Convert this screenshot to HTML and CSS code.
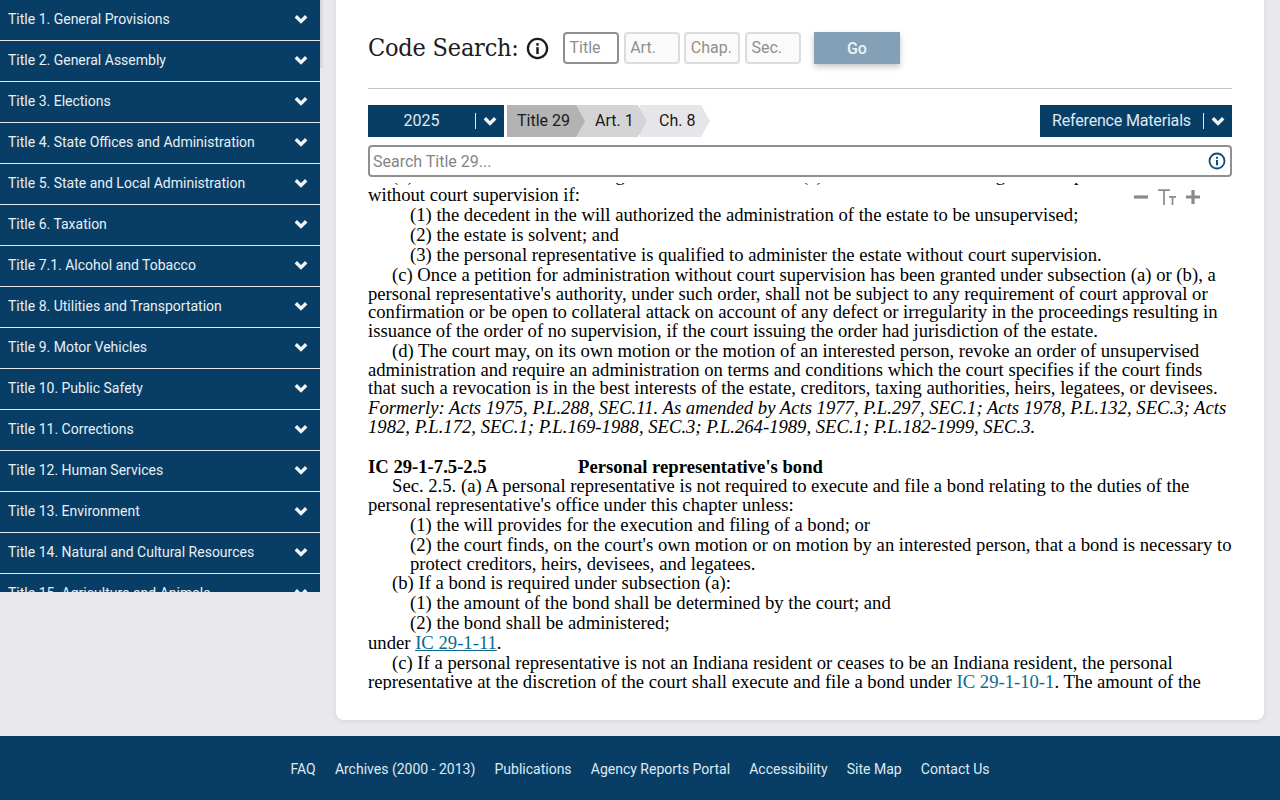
FILE: index.html
```html
<!DOCTYPE html>
<html lang="en">
<head>
<meta charset="utf-8">
<title>Indiana Code</title>
<link rel="stylesheet" href="styles.css">
</head>
<body>
<svg class="defs" width="0" height="0" aria-hidden="true">
  <symbol id="chev" viewBox="0 0 14 10"><path d="M1.8 2.2 L7 7.4 L12.2 2.2" fill="none" stroke="currentColor" stroke-width="3.4"/></symbol>
  <symbol id="info" viewBox="0 0 24 24"><circle cx="12" cy="12" r="10" fill="none" stroke="currentColor" stroke-width="2.4"/><rect x="10.7" y="10.6" width="2.6" height="7.2" fill="currentColor"/><rect x="10.7" y="6.4" width="2.6" height="2.6" fill="currentColor"/></symbol>
</svg>
<div class="layout">
  <nav class="side">
    <a class="side-item">Title 1. General Provisions<svg class="chev"><use href="#chev"/></svg></a>
    <a class="side-item">Title 2. General Assembly<svg class="chev"><use href="#chev"/></svg></a>
    <a class="side-item">Title 3. Elections<svg class="chev"><use href="#chev"/></svg></a>
    <a class="side-item">Title 4. State Offices and Administration<svg class="chev"><use href="#chev"/></svg></a>
    <a class="side-item">Title 5. State and Local Administration<svg class="chev"><use href="#chev"/></svg></a>
    <a class="side-item">Title 6. Taxation<svg class="chev"><use href="#chev"/></svg></a>
    <a class="side-item">Title 7.1. Alcohol and Tobacco<svg class="chev"><use href="#chev"/></svg></a>
    <a class="side-item">Title 8. Utilities and Transportation<svg class="chev"><use href="#chev"/></svg></a>
    <a class="side-item">Title 9. Motor Vehicles<svg class="chev"><use href="#chev"/></svg></a>
    <a class="side-item">Title 10. Public Safety<svg class="chev"><use href="#chev"/></svg></a>
    <a class="side-item">Title 11. Corrections<svg class="chev"><use href="#chev"/></svg></a>
    <a class="side-item">Title 12. Human Services<svg class="chev"><use href="#chev"/></svg></a>
    <a class="side-item">Title 13. Environment<svg class="chev"><use href="#chev"/></svg></a>
    <a class="side-item">Title 14. Natural and Cultural Resources<svg class="chev"><use href="#chev"/></svg></a>
    <a class="side-item">Title 15. Agriculture and Animals<svg class="chev"><use href="#chev"/></svg></a>
  </nav>
  <main class="card">
    <div class="search-row">
      <h1 class="search-title">Code Search:</h1>
      <svg class="info-lg"><use href="#info"/></svg>
      <div class="code-fields">
        <span class="field field-active">Title</span>
        <span class="field">Art.</span>
        <span class="field">Chap.</span>
        <span class="field">Sec.</span>
      </div>
      <button class="go">Go</button>
    </div>
    <hr class="rule">
    <div class="crumb-row">
      <div class="select select-year"><span class="select-label">2025</span><span class="select-sep"></span><svg class="chev"><use href="#chev"/></svg></div>
      <div class="crumbs">
        <span class="crumb crumb-1">Title 29</span>
        <span class="crumb crumb-2">Art. 1</span>
        <span class="crumb crumb-3">Ch. 8</span>
      </div>
      <div class="select select-ref"><span class="select-label">Reference Materials</span><span class="select-sep"></span><svg class="chev"><use href="#chev"/></svg></div>
    </div>
    <div class="doc-search">
      <span class="doc-search-text">Search Title 29...</span>
      <svg class="info-sm"><use href="#info"/></svg>
    </div>
    <div class="doc-wrap">
      <div class="font-tools">
        <svg class="tool" viewBox="0 0 16 16"><rect x="1" y="6.4" width="14" height="3.2" fill="currentColor"/></svg>
        <svg class="tool-t" viewBox="0 0 20 18"><path d="M1 2.2H13M7 2.2V17M12 8.8H19M15.5 8.8V17" fill="none" stroke="currentColor" stroke-width="1.7"/></svg>
        <svg class="tool" viewBox="0 0 16 16"><path d="M1 6.4H6.4V1H9.6V6.4H15V9.6H9.6V15H6.4V9.6H1Z" fill="currentColor"/></svg>
      </div>
      <div class="doc">
        <p class="in1 clipped">(b) The court shall order all legal administration to the (a) and the estate shall be given to a personal</p>
        <p>without court supervision if:</p>
        <p class="in2">(1) the decedent in the will authorized the administration of the estate to be unsupervised;</p>
        <p class="in2">(2) the estate is solvent; and</p>
        <p class="in2">(3) the personal representative is qualified to administer the estate without court supervision.</p>
        <p class="in1">(c) Once a petition for administration without court supervision has been granted under subsection (a) or (b), a personal representative's authority, under such order, shall not be subject to any requirement of court approval or confirmation or be open to collateral attack on account of any defect or irregularity in the proceedings resulting in issuance of the order of no supervision, if the court issuing the order had jurisdiction of the estate.</p>
        <p class="in1">(d) The court may, on its own motion or the motion of an interested person, revoke an order of unsupervised administration and require an administration on terms and conditions which the court specifies if the court finds that such a revocation is in the best interests of the estate, creditors, taxing authorities, heirs, legatees, or devisees.</p>
        <p class="hist"><i>Formerly: Acts 1975, P.L.288, SEC.11. As amended by Acts 1977, P.L.297, SEC.1; Acts 1978, P.L.132, SEC.3; Acts 1982, P.L.172, SEC.1; P.L.169-1988, SEC.3; P.L.264-1989, SEC.1; P.L.182-1999, SEC.3.</i></p>
        <p class="sec-head"><b class="sec-num">IC 29-1-7.5-2.5</b><b>Personal representative's bond</b></p>
        <p class="in1">Sec. 2.5. (a) A personal representative is not required to execute and file a bond relating to the duties of the personal representative's office under this chapter unless:</p>
        <p class="in2">(1) the will provides for the execution and filing of a bond; or</p>
        <p class="in2">(2) the court finds, on the court's own motion or on motion by an interested person, that a bond is necessary to protect creditors, heirs, devisees, and legatees.</p>
        <p class="in1 nudge-up">(b) If a bond is required under subsection (a):</p>
        <p class="in2">(1) the amount of the bond shall be determined by the court; and</p>
        <p class="in2">(2) the bond shall be administered;</p>
        <p class="nudge-down">under <a class="cite cite-u">IC 29-1-11</a>.</p>
        <p class="in1">(c) If a personal representative is not an Indiana resident or ceases to be an Indiana resident, the personal representative at the discretion of the court shall execute and file a bond under <a class="cite">IC 29-1-10-1</a>. The amount of the bond shall be determined by the court.</p>
      </div>
    </div>
  </main>
</div>
<footer class="foot">
  <div class="foot-links">
    <a>FAQ</a><a>Archives (2000 - 2013)</a><a>Publications</a><a>Agency Reports Portal</a><a>Accessibility</a><a>Site Map</a><a>Contact Us</a>
  </div>
  <div class="foot-links foot-second">
    <a>Administrative Code</a><a>Indiana Register</a><a>Legislative Research and Reports</a><a>Copyright Notice</a><a>Privacy Policy</a>
  </div>
</footer>
</body>
</html>
```

FILE: styles.css
```css
* { box-sizing: border-box; }
html, body { margin: 0; padding: 0; height: 800px; overflow: hidden; }
body { background: #e8e8ed; font-family: Roboto, "Liberation Sans", sans-serif; }
.defs { position: absolute; }

.layout { position: relative; display: flex; height: 736px; padding-bottom: 16px; }
.layout::before { content: ""; position: absolute; left: 320px; top: 0; width: 4px; height: 68px; background: linear-gradient(to right, rgba(0,0,0,.1), rgba(0,0,0,0)); }

.side { width: 320px; height: 592px; overflow: hidden; flex: none; background: #083e66; }
.side-item { display: flex; align-items: center; justify-content: space-between; height: 41px; padding: 0 12px 3px 8px; color: #e9eff4; font-size: 14px; line-height: 38px; border-bottom: 1px solid #e4e9ee; }
.chev { width: 14px; height: 10px; flex: none; color: #f2f5f8; }

.card { width: 928px; height: 720px; margin-left: 16px; padding: 32px 32px 0; background: #fff; border-radius: 0 0 8px 8px; box-shadow: 0 1px 6px rgba(0,0,0,.08); display: flex; flex-direction: column; }

.search-row { display: flex; align-items: center; height: 32px; }
.search-title { margin: -2px 0 0; width: 150px; font-family: "DejaVu Serif Condensed", "DejaVu Serif", serif; font-weight: 400; font-size: 25px; letter-spacing: -.2px; color: #1c1c1c; white-space: nowrap; }
.info-lg { width: 23px; height: 23px; margin-left: 8px; color: #1c1c1c; }
.code-fields { display: flex; gap: 4.67px; margin-left: 14px; }
.field { width: 56px; height: 32px; border: 2px solid #dcdcdc; border-radius: 4px; background: #fafafa; color: #8f8f8f; font-size: 16px; line-height: 28px; padding-left: 4.5px; }
.field-active { border-color: #8f8f8f; background: #fff; }
.go { width: 86px; height: 32px; margin-left: 13px; border: 0; background: #83a0b6; color: #eef3f7; font: 500 16px Roboto, sans-serif; box-shadow: 0 3px 6px rgba(0,0,0,.22); }

.rule { width: 100%; margin: 24px 0 16px; border: 0; border-top: 1px solid #c4c4c4; }

.crumb-row { display: flex; height: 32px; }
.select { display: flex; align-items: center; height: 32px; padding-bottom: 1px; background: #083e66; color: #dfe9f1; font-size: 16px; }
.select-year { width: 136px; padding-right: 7px; }
.select-year .select-label { flex: 1; text-align: center; }
.select-ref { width: 192px; margin-left: auto; padding-left: 12px; padding-right: 7px; letter-spacing: -.17px; }
.select-ref .select-label { flex: 1; white-space: nowrap; }
.select-sep { width: 1px; height: 16px; background: #dfe9f1; margin-right: 7px; }
.crumbs { display: flex; margin-left: 3px; }
.crumb { display: flex; align-items: center; height: 32px; padding-bottom: 1px; color: #1a1a1a; font-size: 16px; clip-path: polygon(0 0, calc(100% - 9px) 0, 100% 50%, calc(100% - 9px) 100%, 0 100%); }
.crumb-1 { width: 78px; padding-left: 10px; background: #b3b3b3; position: relative; z-index: 3; }
.crumb-2 { width: 71px; margin-left: -9px; padding-left: 19px; background: #d4d4d6; position: relative; z-index: 2; }
.crumb-3 { width: 70px; margin-left: -7px; padding-left: 19px; background: #e6e6ea; }

.doc-search { display: flex; align-items: center; justify-content: space-between; height: 32px; margin-top: 8px; padding: 0 4px 0 3px; border: 2px solid #8f8f8f; border-radius: 4px; color: #858585; font-size: 16px; }
.info-sm { width: 18px; height: 18px; color: #0a4d7d; }

.doc-wrap { position: relative; flex: none; height: 507px; margin-top: 6px; overflow: hidden; }
.font-tools { position: absolute; top: 4px; right: 31px; display: flex; align-items: center; gap: 8px; height: 20px; color: #8a8a8a; z-index: 2; }
.tool { width: 16px; height: 16px; }
.tool-t { width: 20px; height: 18px; }

.doc { margin-top: -17px; color: #000; font-family: "Liberation Serif", "Times New Roman", serif; font-size: 18.67px; line-height: 18.67px; }
.doc p { margin: 0 0 1.33px; }
.doc .clipped { white-space: nowrap; }
.doc .in1 { text-indent: 24px; }
.doc .in2 { margin-left: 42px; }
.doc .sec-head { margin-top: 20.9px; margin-bottom: 1px; }
.doc .nudge-up { margin-top: -.6px; }
.doc .nudge-down { margin-top: 1.1px; }
.sec-num { display: inline-block; width: 210px; }
.cite { color: #0b6b8f; }
.cite-u { text-decoration: underline; }

.foot { height: 200px; background: #083e66; padding-top: 24px; }
.foot-links { display: flex; justify-content: center; gap: 19.2px; color: #dfe9f1; font-size: 14px; line-height: 18px; }
.foot-second { margin-top: 18.5px; }
```
